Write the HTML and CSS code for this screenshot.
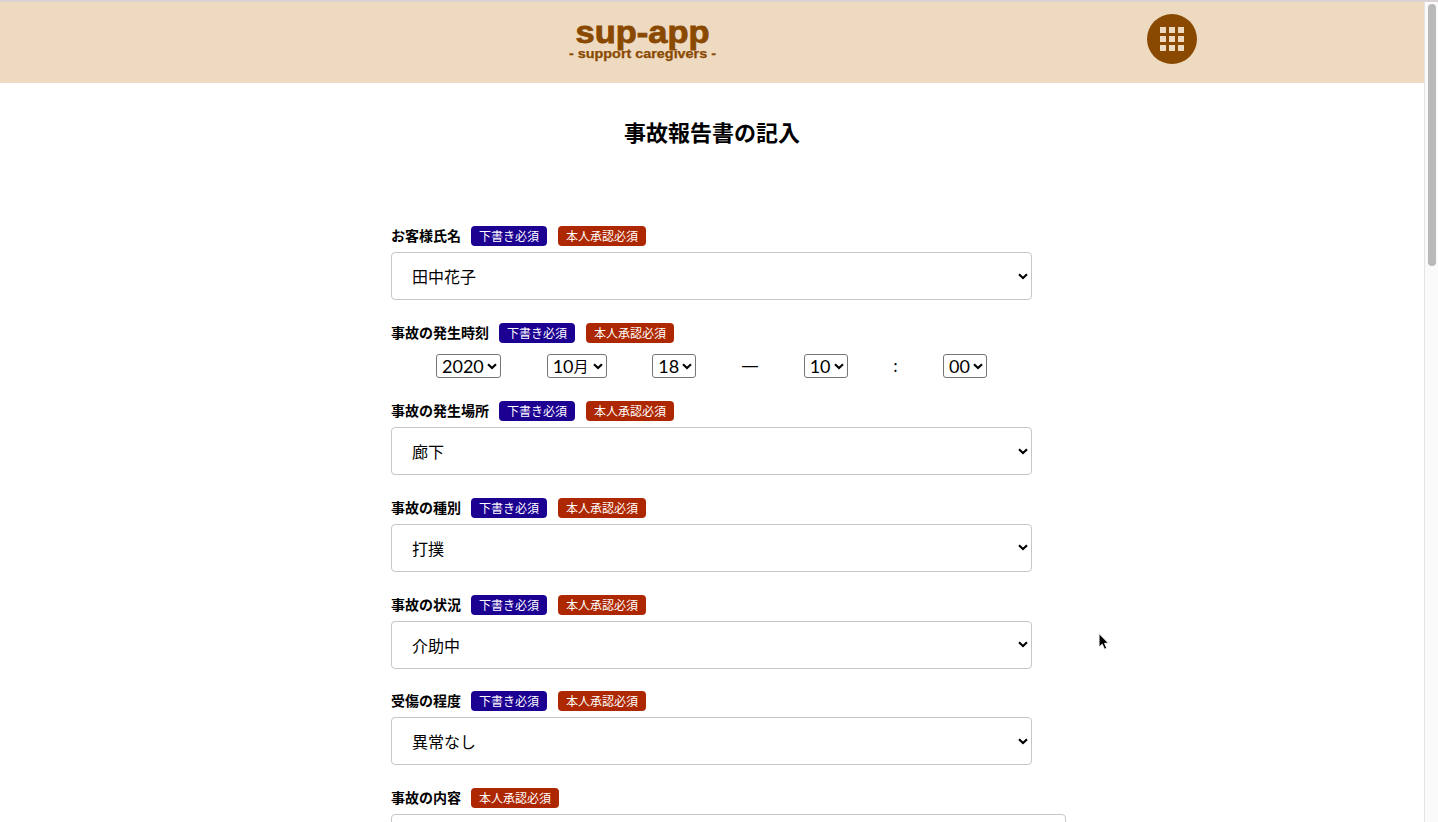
FILE: index.html
```html
<!DOCTYPE html>
<html lang="ja">
<head>
<meta charset="utf-8">
<title>事故報告書の記入</title>
<link rel="stylesheet" href="styles.css">
</head>
<body>
<svg class="defs" width="0" height="0"><symbol id="chev" viewBox="0 0 10 7"><path d="M1 1.2 5 5 9 1.2" fill="none" stroke="#000" stroke-width="2.1"/></symbol></svg>
<div class="window">
  <div class="page">
    <header class="header">
      <svg class="logo" width="150" height="60" viewBox="0 0 150 60">
        <text class="logo-name" x="7.5" y="37" textLength="134" lengthAdjust="spacingAndGlyphs">sup-app</text>
        <text class="logo-sub" x="1" y="52" textLength="147" lengthAdjust="spacingAndGlyphs">- support caregivers -</text>
      </svg>
      <div class="menu"><i></i><i></i><i></i><i></i><i></i><i></i><i></i><i></i><i></i></div>
    </header>
    <h1 class="title">事故報告書の記入</h1>
    <main class="form">
      <section class="field">
        <div class="label"><b>お客様氏名</b><span class="badge draft">下書き必須</span><span class="badge approve">本人承認必須</span></div>
        <div class="select">田中花子<svg class="chev"><use href="#chev"/></svg></div>
      </section>
      <section class="field time-field">
        <div class="label"><b>事故の発生時刻</b><span class="badge draft">下書き必須</span><span class="badge approve">本人承認必須</span></div>
        <div class="times">
          <div class="mini year">2020<svg class="chev"><use href="#chev"/></svg></div>
          <div class="mini month">10<span class="unit">月</span><svg class="chev"><use href="#chev"/></svg></div>
          <div class="mini">18<svg class="chev"><use href="#chev"/></svg></div>
          <span class="dash">—</span>
          <div class="mini">10<svg class="chev"><use href="#chev"/></svg></div>
          <span class="colon">:</span>
          <div class="mini">00<svg class="chev"><use href="#chev"/></svg></div>
        </div>
      </section>
      <section class="field">
        <div class="label"><b>事故の発生場所</b><span class="badge draft">下書き必須</span><span class="badge approve">本人承認必須</span></div>
        <div class="select">廊下<svg class="chev"><use href="#chev"/></svg></div>
      </section>
      <section class="field">
        <div class="label"><b>事故の種別</b><span class="badge draft">下書き必須</span><span class="badge approve">本人承認必須</span></div>
        <div class="select">打撲<svg class="chev"><use href="#chev"/></svg></div>
      </section>
      <section class="field">
        <div class="label"><b>事故の状況</b><span class="badge draft">下書き必須</span><span class="badge approve">本人承認必須</span></div>
        <div class="select">介助中<svg class="chev"><use href="#chev"/></svg></div>
      </section>
      <section class="field">
        <div class="label"><b>受傷の程度</b><span class="badge draft">下書き必須</span><span class="badge approve">本人承認必須</span></div>
        <div class="select">異常なし<svg class="chev"><use href="#chev"/></svg></div>
      </section>
      <section class="field">
        <div class="label"><b>事故の内容</b><span class="badge approve">本人承認必須</span></div>
        <div class="textarea"></div>
      </section>
    </main>
  </div>
  <div class="scrollbar"><div class="thumb"></div></div>
</div>
<svg class="cursor" width="14" height="20" viewBox="0 0 14 20"><path d="M2 1.5V15.2L5.2 12.2 7.5 17.3 9.8 16.3 7.6 11.3H11.6Z" fill="#000" stroke="#fff" stroke-width="1"/></svg>
</body>
</html>
```
FILE: styles.css
```css
* { box-sizing: border-box; }
body {
  margin: 0;
  height: 822px;
  overflow: hidden;
  background: #fff;
  color: #000;
  font-family: "Noto Sans CJK JP", sans-serif;
}
.defs { position: absolute; }
.window {
  display: flex;
  height: 822px;
  border-top: 2px solid #d9d4d3;
  overflow: hidden;
}
.page { width: 1424px; flex: none; }
.header {
  display: flex;
  height: 81px;
  padding: 4px 227px 0 568px;
  justify-content: space-between;
  align-items: flex-start;
  background: #eedac1;
}
.logo { fill: #8a4900; font-family: "Liberation Sans", Arial, sans-serif; font-weight: bold; }
.logo-name { font-size: 30.5px; stroke: #8a4900; stroke-width: .8px; }
.logo-sub { font-size: 12.5px; stroke: #8a4900; stroke-width: .25px; }
.menu {
  display: grid;
  width: 50px;
  height: 50px;
  margin-top: 8px;
  grid-template-columns: repeat(3, 6px);
  grid-auto-rows: 6px;
  gap: 3px;
  place-content: center;
  border-radius: 50%;
  background: #8a4900;
}
.menu i { background: #eedac1; }
.title {
  margin: 31px 0 0;
  height: 34px;
  font-size: 22px;
  line-height: 34px;
  text-align: center;
}
.form { width: 641px; margin: 78px 0 0 391px; }
.field { height: 96.8px; }
.field:first-child { height: 97px; }
.field.time-field { height: 78px; }
.label { display: flex; height: 20px; align-items: center; font-size: 14px; line-height: 20px; white-space: nowrap; }
.label b { height: 20px; line-height: 18px; }
.badge {
  height: 20px;
  margin-left: 10px;
  padding: 0 8px;
  border-radius: 4px;
  color: #fff;
  font-size: 12px;
  line-height: 20px;
}
.draft { width: 76px; background: #1b0091; }
.approve { width: 88px; background: #ad2700; }
.draft + .approve { margin-left: 11px; }
.select {
  display: flex;
  height: 48px;
  margin-top: 6px;
  padding: 0 3px 0 20px;
  align-items: center;
  justify-content: space-between;
  border: 1px solid #c6c6c6;
  border-radius: 4px;
  font-size: 16px;
}
.chev { width: 10px; height: 7px; flex: none; }
.textarea { width: 675px; height: 120px; margin-top: 6px; border: 1px solid #c6c6c6; border-radius: 4px; }
.times {
  display: flex;
  height: 24px;
  margin-top: 11px;
  padding: 0 45px;
  justify-content: space-between;
  align-items: center;
}
.mini {
  display: flex;
  width: 44px;
  height: 24px;
  padding: 0 3px 0 5px;
  align-items: center;
  justify-content: space-between;
  border: 1px solid #767676;
  border-radius: 3px;
  font-family: Lato, "Noto Sans CJK JP", sans-serif;
  font-size: 18px;
  line-height: 20px;
  padding-bottom: 1px;
}
.mini .chev { margin-top: 1px; }
.year { width: 65px; }
.month { width: 60px; }
.unit { margin-right: auto; font-size: 15px; }
.dash { font-family: "Liberation Sans", Arial, sans-serif; font-size: 16px; }
.colon { width: 4px; font-size: 16px; line-height: 20px; margin-top: -2px; }
.scrollbar { width: 14px; padding: 2px 1px 0 3px; border-left: 1px solid #e4e4e4; background: #fafafa; }
.thumb { width: 8px; height: 262px; border-radius: 4px; background: #b9b9b9; }
.cursor { position: absolute; left: 1097px; top: 632px; }
```
